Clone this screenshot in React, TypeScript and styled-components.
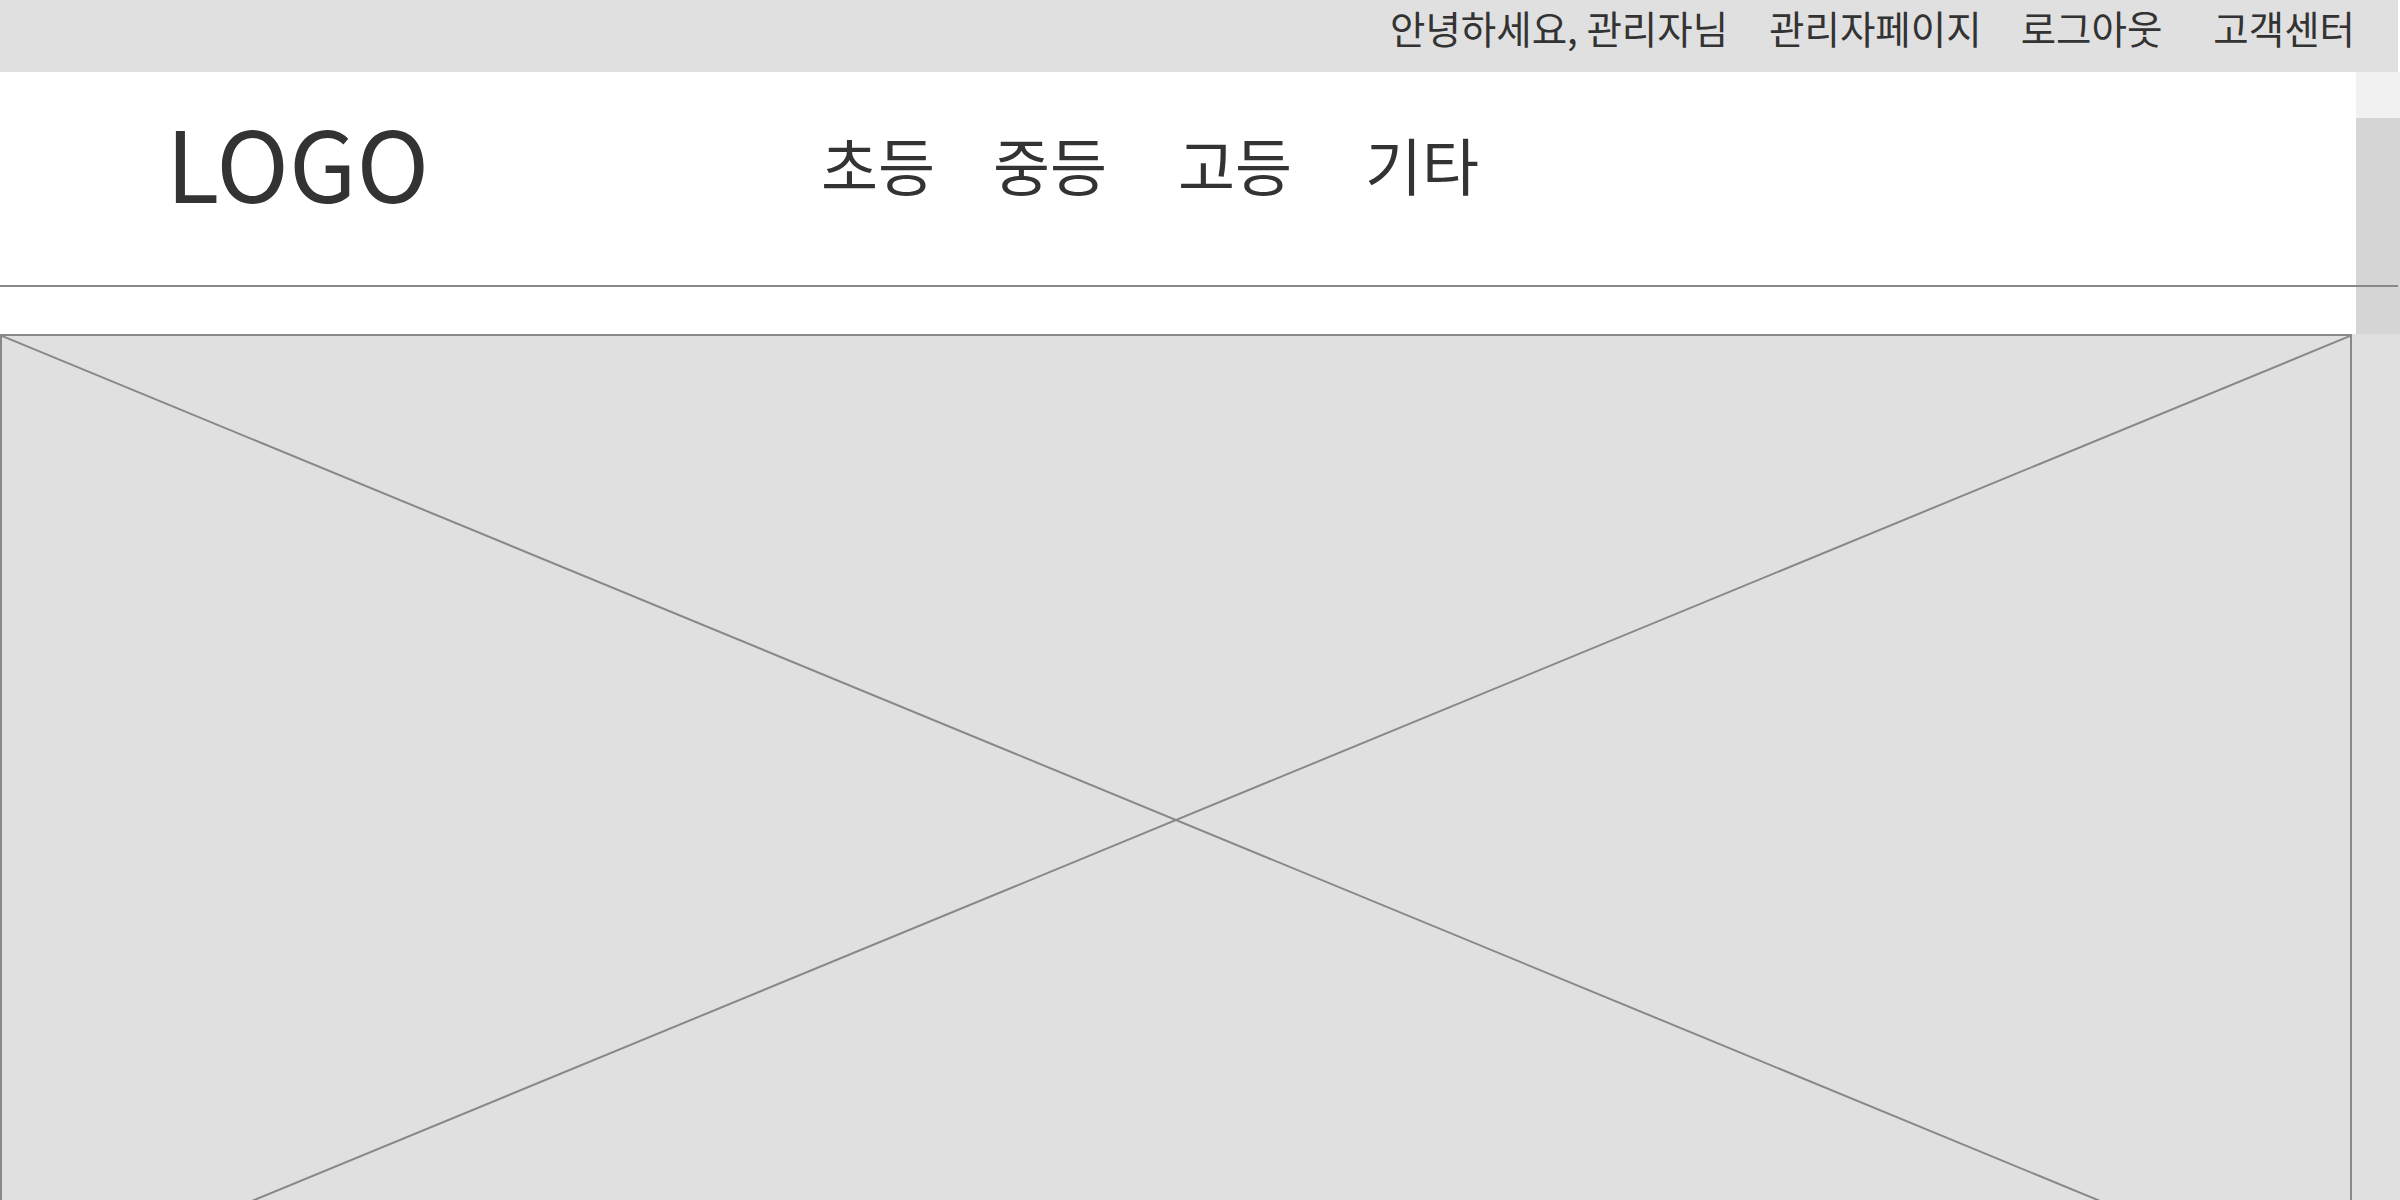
import styled, { createGlobalStyle } from 'styled-components';

const GlobalStyle = createGlobalStyle`
  html, body {
    margin: 0;
    padding: 0;
    overflow: hidden;
  }
  body {
    font-family: 'Noto Sans CJK KR', 'Noto Sans', sans-serif;
    color: #333;
    background: #fff;
  }
`;

const Page = styled.div`
  width: 2400px;
  height: 1200px;
  overflow: hidden;
  display: flex;
  flex-direction: column;
`;

const TopBar = styled.div`
  width: 2398px;
  height: 72px;
  box-sizing: border-box;
  padding-right: 43px;
  background: #e0e0e0;
  display: flex;
  justify-content: flex-end;
  align-items: flex-start;
  font-size: 38.5px;
  line-height: 54px;
  flex-shrink: 0;
`;

const TopLink = styled.a<{ $gap: number }>`
  flex-shrink: 0;
  margin-left: ${(p) => p.$gap}px;
  color: #333;
  text-decoration: none;
  white-space: nowrap;
  cursor: pointer;
`;

const Upper = styled.div`
  position: relative;
  display: flex;
  height: 262px;
  flex-shrink: 0;
`;

const HeaderArea = styled.div`
  width: 2356px;
  display: flex;
  flex-direction: column;
  background: #fff;
`;

const Header = styled.header`
  height: 213px;
  box-sizing: border-box;
  padding-left: 166px;
  display: flex;
  align-items: flex-start;
`;

const Logo = styled.div`
  width: 655px;
  margin-top: 39px;
  font-size: 98px;
  line-height: 98px;
`;

const Nav = styled.nav`
  margin-top: 61px;
  display: grid;
  grid-template-columns: 172px 185px 187px auto;
  font-size: 62px;
  line-height: 62px;
`;

const NavItem = styled.a`
  color: #333;
  text-decoration: none;
  white-space: nowrap;
  cursor: pointer;
`;

const Divider = styled.div`
  position: absolute;
  left: 0;
  top: 213px;
  width: 2398px;
  height: 2px;
  background: #888;
  z-index: 1;
`;

const Scrollbar = styled.div`
  width: 44px;
  display: flex;
  flex-direction: column;
  background: #f1f1f1;
`;

const ScrollTrack = styled.div`
  height: 46px;
`;

const ScrollThumb = styled.div`
  flex: 1;
  background: #d6d6d6;
`;

const Lower = styled.div`
  flex: 1;
  background: #e0e0e0;
`;

const Placeholder = styled.div`
  width: 2352px;
  height: 972px;
  box-sizing: border-box;
  border: 2px solid #888;
  background: #e0e0e0;
`;

const Cross = styled.svg`
  display: block;
  width: 100%;
  height: 100%;
`;

const topLinks = [
  { label: '안녕하세요, 관리자님', gap: 0 },
  { label: '관리자페이지', gap: 41 },
  { label: '로그아웃', gap: 39 },
  { label: '고객센터', gap: 51 },
];

const menus = ['초등', '중등', '고등', '기타'];

const App = () => {
  return (
    <>
      <GlobalStyle />
      <Page>
        <TopBar>
          {topLinks.map((l) => (
            <TopLink key={l.label} $gap={l.gap}>
              {l.label}
            </TopLink>
          ))}
        </TopBar>
        <Upper>
          <HeaderArea>
            <Header>
              <Logo>LOGO</Logo>
              <Nav>
                {menus.map((m) => (
                  <NavItem key={m}>{m}</NavItem>
                ))}
              </Nav>
            </Header>
          </HeaderArea>
          <Scrollbar>
            <ScrollTrack />
            <ScrollThumb />
          </Scrollbar>
          <Divider />
        </Upper>
        <Lower>
          <Placeholder>
            <Cross viewBox="0 0 100 100" preserveAspectRatio="none">
              <line
                x1="0"
                y1="0"
                x2="100"
                y2="100"
                stroke="#888"
                strokeWidth="2"
                vectorEffect="non-scaling-stroke"
              />
              <line
                x1="100"
                y1="0"
                x2="0"
                y2="100"
                stroke="#888"
                strokeWidth="2"
                vectorEffect="non-scaling-stroke"
              />
            </Cross>
          </Placeholder>
        </Lower>
      </Page>
    </>
  );
};

export default App;
